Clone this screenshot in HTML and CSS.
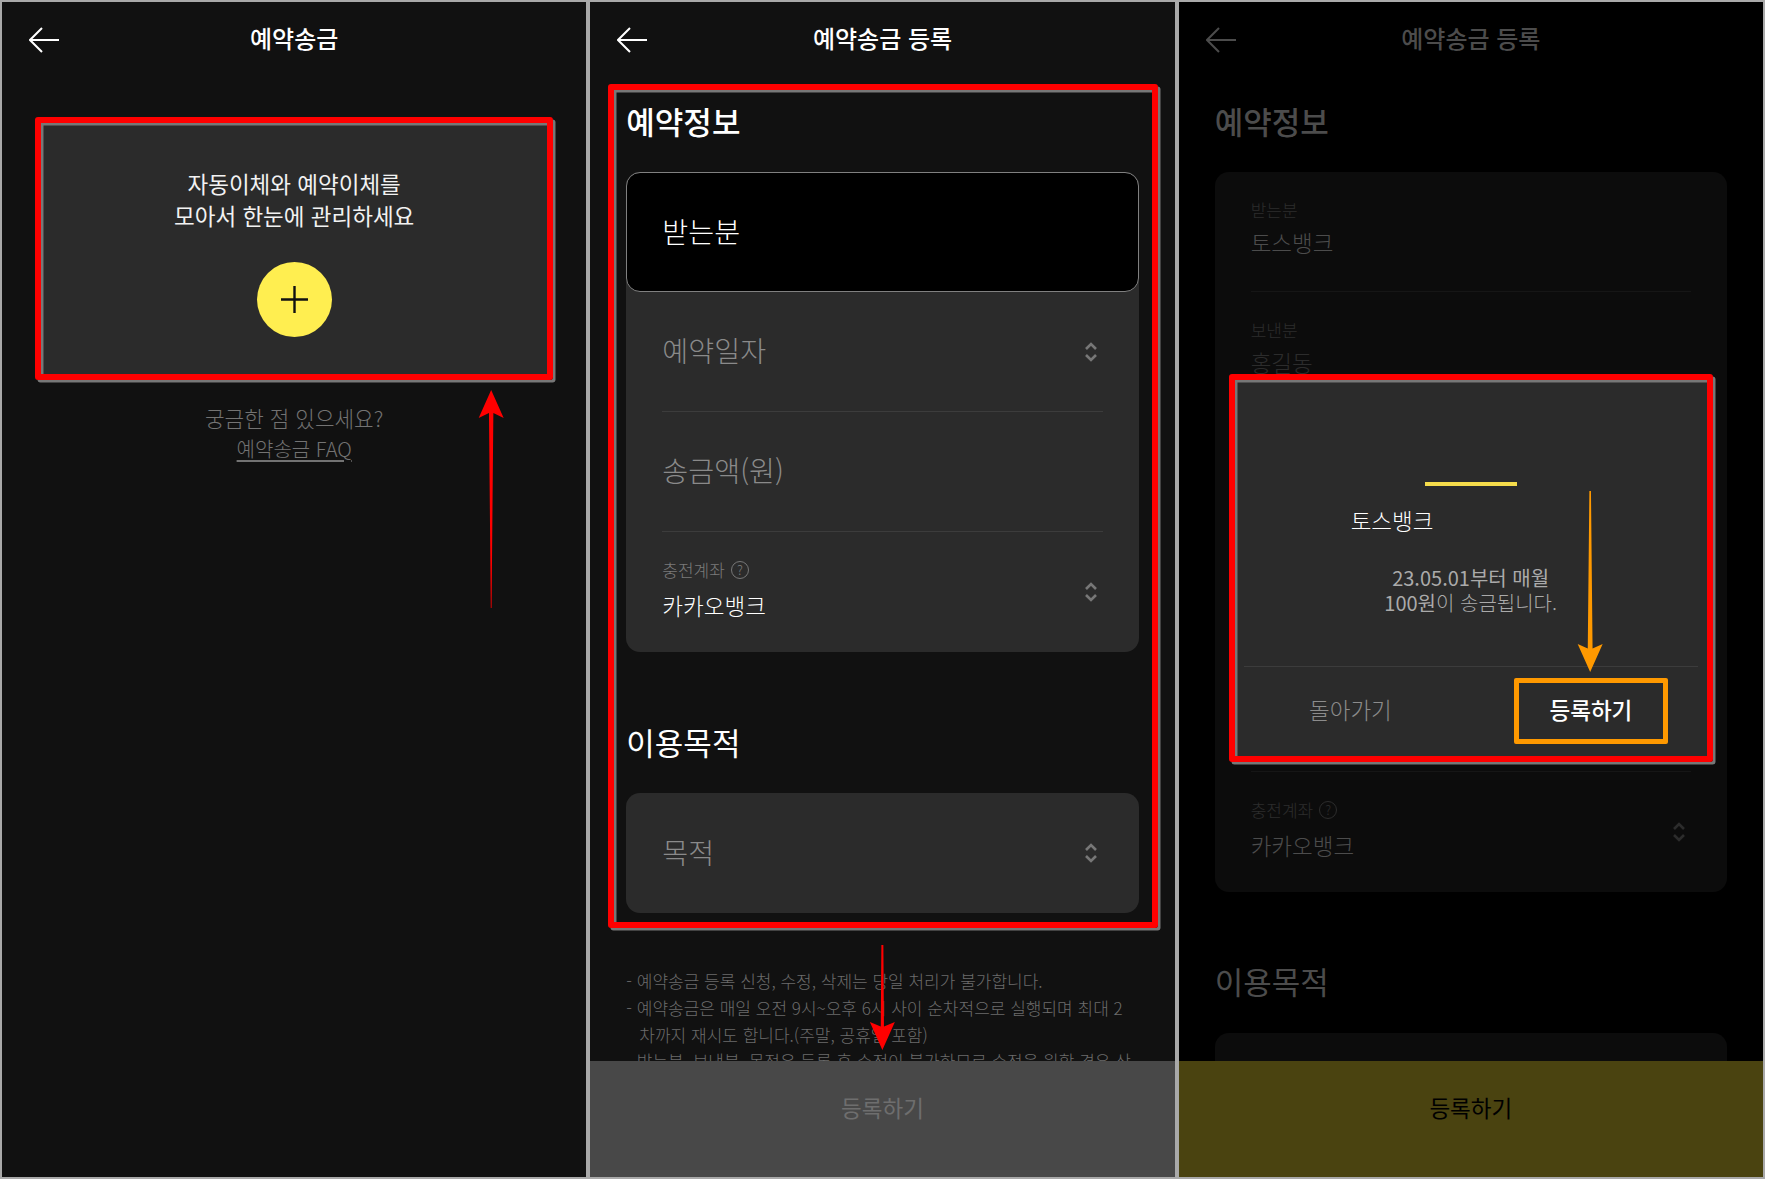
FILE: index.html
```html
<!DOCTYPE html>
<html lang="ko">
<head>
<meta charset="utf-8">
<title>예약송금</title>
<link rel="stylesheet" href="styles.css">
</head>
<body>
<div class="frame">

  <section class="panel">
    <header class="head">
      <svg class="back" viewBox="0 0 30 26"><path d="M30 13H1M13 1 1 13l12 12"/></svg>
      <h1 class="title">예약송금</h1>
    </header>
    <div class="promo">
      <p class="promo-text">자동이체와 예약이체를<br>모아서 한눈에 관리하세요</p>
      <button class="add"><svg viewBox="0 0 27 27"><path d="M0 13.5h27M13.5 0v27"/></svg></button>
      <div class="mark"></div>
    </div>
    <p class="faq-q">궁금한 점 있으세요?</p>
    <p class="faq-a"><a>예약송금 FAQ</a></p>
    <svg class="arrows" viewBox="0 0 584 1175"><polygon class="red" points="489,388 501.5,416 491.2,411 489.4,606 488.6,606 486.8,411 476.5,416"/></svg>
  </section>

  <section class="panel">
    <header class="head">
      <svg class="back" viewBox="0 0 30 26"><path d="M30 13H1M13 1 1 13l12 12"/></svg>
      <h1 class="title">예약송금 등록</h1>
    </header>
    <main class="body">
      <div class="form">
        <h2 class="section">예약정보</h2>
        <div class="card">
          <div class="row focus"><span class="input on">받는분</span></div>
          <div class="row"><span class="input">예약일자</span><svg class="updown" viewBox="0 0 14 22"><path d="M2 8l5-5 5 5M2 14l5 5 5-5"/></svg></div>
          <div class="row"><span class="input">송금액(원)</span></div>
          <div class="row last">
            <div class="stack">
              <span class="label">충전계좌 <i class="help">?</i></span>
              <span class="value">카카오뱅크</span>
            </div>
            <svg class="updown" viewBox="0 0 14 22"><path d="M2 8l5-5 5 5M2 14l5 5 5-5"/></svg>
          </div>
        </div>
        <h2 class="section second">이용목적</h2>
        <div class="card">
          <div class="row last"><span class="input">목적</span><svg class="updown" viewBox="0 0 14 22"><path d="M2 8l5-5 5 5M2 14l5 5 5-5"/></svg></div>
        </div>
        <div class="mark wide"></div>
      </div>
      <ul class="notes">
        <li>- 예약송금 등록 신청, 수정, 삭제는 당일 처리가 불가합니다.</li>
        <li>- 예약송금은 매일 오전 9시~오후 6시 사이 순차적으로 실행되며 최대 2<br>차까지 재시도 합니다.(주말, 공휴일 포함)</li>
        <li>- 받는분, 보낸분, 목적은 등록 후 수정이 불가하므로 수정을 원할 경우 삭제 후 다시 등록해 주세요.</li>
      </ul>
    </main>
    <div class="bar">등록하기</div>
    <svg class="arrows" viewBox="0 0 584 1175"><polygon class="red" points="292.2,1048 279.7,1020 290.6,1024.5 291.2,943 293.2,943 293.8,1024.5 304.7,1020"/></svg>
  </section>

  <section class="panel dim">
    <header class="head">
      <svg class="back" viewBox="0 0 30 26"><path d="M30 13H1M13 1 1 13l12 12"/></svg>
      <h1 class="title">예약송금 등록</h1>
    </header>
    <main class="body">
      <h2 class="section">예약정보</h2>
      <div class="card">
        <div class="row"><div class="stack tight"><span class="label">받는분</span><span class="value">토스뱅크</span></div></div>
        <div class="row"><div class="stack tight"><span class="label">보낸분</span><span class="value faint">홍길동</span></div></div>
        <div class="row"></div>
        <div class="row"></div>
        <div class="row"></div>
        <div class="row last">
          <div class="stack">
            <span class="label">충전계좌 <i class="help">?</i></span>
            <span class="value">카카오뱅크</span>
          </div>
          <svg class="updown" viewBox="0 0 14 22"><path d="M2 8l5-5 5 5M2 14l5 5 5-5"/></svg>
        </div>
      </div>
      <h2 class="section second">이용목적</h2>
      <div class="card">
        <div class="row last"></div>
      </div>
    </main>
    <div class="bar gold">등록하기</div>
    <div class="dialog">
      <div class="logo-line"></div>
      <p class="bank">토스뱅크</p>
      <p class="message"><strong>23.05.01부터 매월</strong><br><strong>100원</strong>이 송금됩니다.</p>
      <div class="rule"></div>
      <div class="actions">
        <button class="action back-action">돌아가기</button>
        <button class="action confirm"><span class="outlined">등록하기</span></button>
      </div>
      <div class="mark"></div>
    </div>
    <svg class="arrows" viewBox="0 0 584 1175"><polygon class="orange" points="411,670 398.5,642 408.6,646.5 410.2,489 411.8,489 413.4,646.5 423.5,642"/></svg>
  </section>

</div>
</body>
</html>
```

FILE: styles.css
```css
* { box-sizing: border-box; }

html, body {
  margin: 0;
  height: 100%;
}

body {
  background: #a9a9a9;
  font-family: "Noto Sans CJK KR", "Noto Sans", sans-serif;
  color: #fff;
  overflow: hidden;
}

.frame {
  display: flex;
  gap: 4px;
  height: 1179px;
  padding: 2px;
}

.panel {
  position: relative;
  flex: 1 1 0;
  min-width: 0;
  background: #111;
  overflow: hidden;
}

.head {
  display: grid;
  grid-template-columns: 30px 1fr 30px;
  align-items: center;
  height: 74px;
  padding: 0 27px;
}

.back {
  width: 30px;
  height: 26px;
  margin-top: 2px;
  fill: none;
  stroke: #fff;
  stroke-width: 2;
}

.title {
  margin: -3px 0 0;
  text-align: center;
  font-size: 24px;
  font-weight: 500;
}

/* Panel 1 */
.promo {
  position: relative;
  width: 512px;
  margin: 44px auto 0;
  padding: 49px 0 40px;
  background: #2b2b2b;
  text-align: center;
}

.promo-text {
  margin: -1px 0 31px;
  font-size: 22.5px;
  line-height: 31.5px;
  color: #f2f2f2;
}

.add {
  display: block;
  width: 75px;
  height: 75px;
  margin: 0 auto;
  padding: 24px;
  border: 0;
  border-radius: 50%;
  background: #ffee50;
}

.add svg {
  display: block;
  width: 27px;
  height: 27px;
  fill: none;
  stroke: #111;
  stroke-width: 2.4;
}

.faq-q, .faq-a {
  margin: 0;
  text-align: center;
  line-height: 31px;
  color: #737373;
  font-weight: 300;
}

.faq-q {
  margin-top: 25px;
  font-size: 21.3px;
}

.faq-a {
  font-size: 20px;
}

.faq-a a {
  text-decoration: underline;
  text-underline-offset: 3px;
}

/* Panel 2 and 3 form */
.body {
  padding: 0 36px;
}

.form {
  position: relative;
}

.section {
  margin: 0 0 7px;
  font-size: 31px;
  font-weight: 500;
  line-height: 89px;
}

.section.second {
  margin-top: 45px;
  font-weight: 400;
}

.dim .section.second {
  margin-top: 44px;
  margin-bottom: 8px;
}

.card {
  padding: 0 36px;
  border-radius: 14px;
  background: #2b2b2b;
}

.row {
  display: flex;
  align-items: center;
  justify-content: space-between;
  height: 120px;
  border-bottom: 1px solid #3c3c3c;
}

.row.last {
  border-bottom: 0;
}

.row.focus {
  margin: 0 -36px;
  padding: 0 35px;
  border: 1px solid #808080;
  border-radius: 14px;
  background: #000;
}

.input {
  margin-top: -4px;
  font-size: 28.2px;
  font-weight: 300;
  color: #8a8a8a;
}

.input.on {
  color: #fff;
}

.stack {
  display: flex;
  flex-direction: column;
  gap: 6px;
  align-self: flex-start;
  padding-top: 26px;
}

.stack.tight {
  gap: 3px;
}

.label {
  display: flex;
  align-items: center;
  gap: 6px;
  font-size: 17px;
  font-weight: 300;
  line-height: 24px;
  color: #7a7a7a;
}

.help {
  display: inline-flex;
  align-items: center;
  justify-content: center;
  width: 18px;
  height: 18px;
  border: 1px solid #777;
  border-radius: 50%;
  font-size: 13px;
  font-style: normal;
}

.value {
  font-size: 22.5px;
  font-weight: 300;
  line-height: 34px;
  color: #fff;
}

.updown {
  flex: none;
  width: 14px;
  height: 22px;
  margin-right: 5px;
  fill: none;
  stroke: #777;
  stroke-width: 2.6;
}

.notes {
  margin: 55px 0 0;
  padding: 0;
  list-style: none;
  font-size: 17px;
  font-weight: 300;
  line-height: 26.8px;
  color: #6c6c6c;
}

.notes li {
  padding-left: 13px;
  text-indent: -13px;
}

.bar {
  position: absolute;
  left: 0;
  right: 0;
  bottom: 0;
  height: 116px;
  padding-top: 29px;
  background: #484848;
  color: #6e6e6e;
  font-size: 22.5px;
  line-height: 34px;
  text-align: center;
}

/* Panel 3: everything under the modal is dimmed */
.dim {
  background: #000;
}

.dim .title, .dim .section {
  color: #4c4c4c;
}

.dim .back {
  stroke: #4c4c4c;
}

.dim .card {
  background: #0c0c0c;
}

.dim .row {
  border-bottom-color: #161616;
}

.dim .row.last {
  border-bottom: 0;
}

.dim .label {
  color: #2c2c2c;
}

.dim .help {
  border-color: #2c2c2c;
}

.dim .value {
  color: #4c4c4c;
}

.dim .value.faint {
  color: #2c2c2c;
}

.dim .updown {
  stroke: #2c2c2c;
}

.bar.gold {
  background: #4a4310;
  color: #000;
}

.dialog {
  position: absolute;
  top: 375px;
  left: 53px;
  display: flex;
  flex-direction: column;
  width: 478px;
  height: 382px;
  padding-bottom: 5px;
  background: #2b2b2b;
}

.logo-line {
  align-self: center;
  width: 92px;
  height: 4px;
  margin-top: 105px;
  background: #f5dc4b;
}

.bank {
  margin: 18px 0 0 119px;
  font-size: 22.5px;
  font-weight: 300;
  line-height: 32px;
  color: #fff;
}

.message {
  margin: 30px 0 0;
  font-size: 20px;
  font-weight: 300;
  line-height: 24.5px;
  text-align: center;
  color: #aaa;
}

.message strong {
  font-weight: 400;
}

.rule {
  height: 1px;
  margin: auto 12px 0;
  background: #3c3c3c;
}

.actions {
  display: flex;
  height: 87px;
}

.action {
  display: flex;
  flex: 1;
  align-items: center;
  justify-content: center;
  padding: 0 0 3px;
  border: 0;
  background: none;
  color: #8c8c8c;
  font-family: inherit;
  font-size: 22.5px;
  font-weight: 300;
}

.back-action {
  padding-right: 3px;
}

.confirm {
  padding: 0;
  color: #fff;
  font-weight: 500;
}

.outlined {
  display: flex;
  align-items: center;
  justify-content: center;
  width: 154px;
  height: 66px;
  padding-bottom: 3px;
  border: 5px solid #ff9900;
  border-radius: 2px;
}

/* Red annotation boxes and arrows drawn over the screenshot */
.mark {
  position: absolute;
  inset: -3px;
  border: 6px solid #f00;
  border-radius: 3px;
  box-shadow: 2.5px 2.5px 0 #777, inset 2.5px 2.5px 0 #777;
  pointer-events: none;
}

.mark.wide {
  inset: 8px -19px -15px -18px;
}

.arrows {
  position: absolute;
  top: 0;
  left: 0;
  width: 584.33px;
  height: 1175px;
  pointer-events: none;
}

.red {
  fill: #f00;
}

.orange {
  fill: #ff9900;
}
```
